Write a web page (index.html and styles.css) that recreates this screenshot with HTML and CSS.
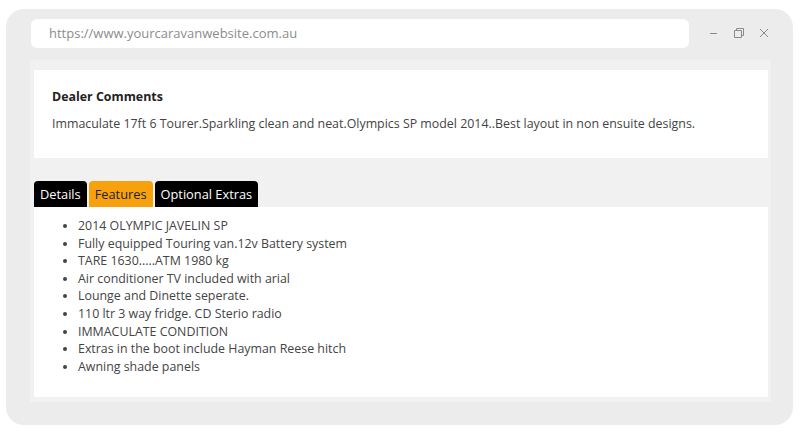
FILE: index.html
```html
<!DOCTYPE HTML>
<html>
<head>
<meta charset="utf-8">
<title>Caravan listing</title>
<link rel="stylesheet" href="styles.css">
</head>
<body>
<div class="window">
	<div class="titlebar">
		<div class="urlbar">https://www.yourcaravanwebsite.com.au</div>
		<div class="controls">
			<svg width="12" height="12" viewBox="0 0 12 12"><path d="M2 6.5h7" stroke="#8a8a8a" stroke-width="1" fill="none"/></svg>
			<svg width="12" height="12" viewBox="0 0 12 12"><path d="M1.5 3.5h7v7h-7z M3.5 3.5v-2h7v7h-2" stroke="#8a8a8a" stroke-width="1" fill="none"/></svg>
			<svg width="12" height="12" viewBox="0 0 12 12"><path d="M2 2l8 8M10 2l-8 8" stroke="#8a8a8a" stroke-width="1" fill="none"/></svg>
		</div>
	</div>
	<div class="page">
		<div class="comments">
			<h3>Dealer Comments</h3>
			<p>Immaculate 17ft 6 Tourer.Sparkling clean and neat.Olympics SP model 2014..Best layout in non ensuite designs.</p>
		</div>
		<div class="tabs">
			<a href="javascript:;">Details</a>
			<a href="javascript:;" class="ac">Features</a>
			<a href="javascript:;">Optional Extras</a>
		</div>
		<div class="tabpanel">
			<ul>
				<li>2014 OLYMPIC JAVELIN SP</li>
				<li>Fully equipped Touring van.12v Battery system</li>
				<li>TARE 1630.....ATM 1980 kg</li>
				<li>Air conditioner TV included with arial</li>
				<li>Lounge and Dinette seperate.</li>
				<li>110 ltr 3 way fridge. CD Sterio radio</li>
				<li>IMMACULATE CONDITION</li>
				<li>Extras in the boot include Hayman Reese hitch</li>
				<li>Awning shade panels</li>
			</ul>
		</div>
	</div>
</div>
</body>
</html>
```

FILE: styles.css
```css
* {margin:0; padding:0; box-sizing:border-box;}
body {background:#fff; font-family:"Open Sans", "Liberation Sans", sans-serif; font-size:12.4px; color:#333;}

.window {margin:9px 0 0 6px; width:787px; height:416px; background:#ececec; border-radius:18px; padding:10px 0 0 24px;}
.titlebar {display:flex; align-items:center; height:29px;}
.urlbar {margin-left:1px; width:658px; height:29px; background:#fff; border-radius:6px; padding-left:18px; line-height:29px; color:#8c8c8c; font-size:13px;}
.controls {display:flex; gap:13px; margin-left:19px; margin-top:-2px;}
.controls svg {display:block;}

.page {margin-top:12px; width:741px; height:342px; background:#f1f1f1; padding:10px 3px 0 4px;}
.comments {background:#fff; height:88px; padding:18px 18px 0;}
.comments h3 {font-size:12.4px; font-weight:bold; line-height:18px; color:#222;}
.comments p {margin-top:9px; line-height:18px; color:#444;}

.tabs {display:flex; gap:2px; margin-top:23px; height:26px;}
.tabs a {display:block; height:26px; line-height:26px; padding:0 6px; font-size:12.8px; background:#000; color:#fff; text-decoration:none; border-radius:4px 4px 0 0;}
.tabs a.ac {background:#f7a20c; color:#222;}

.tabpanel {background:#fff; height:190px; padding-top:10px;}
.tabpanel ul {padding-left:44px; color:#444;}
.tabpanel li {line-height:17.6px;}
```
